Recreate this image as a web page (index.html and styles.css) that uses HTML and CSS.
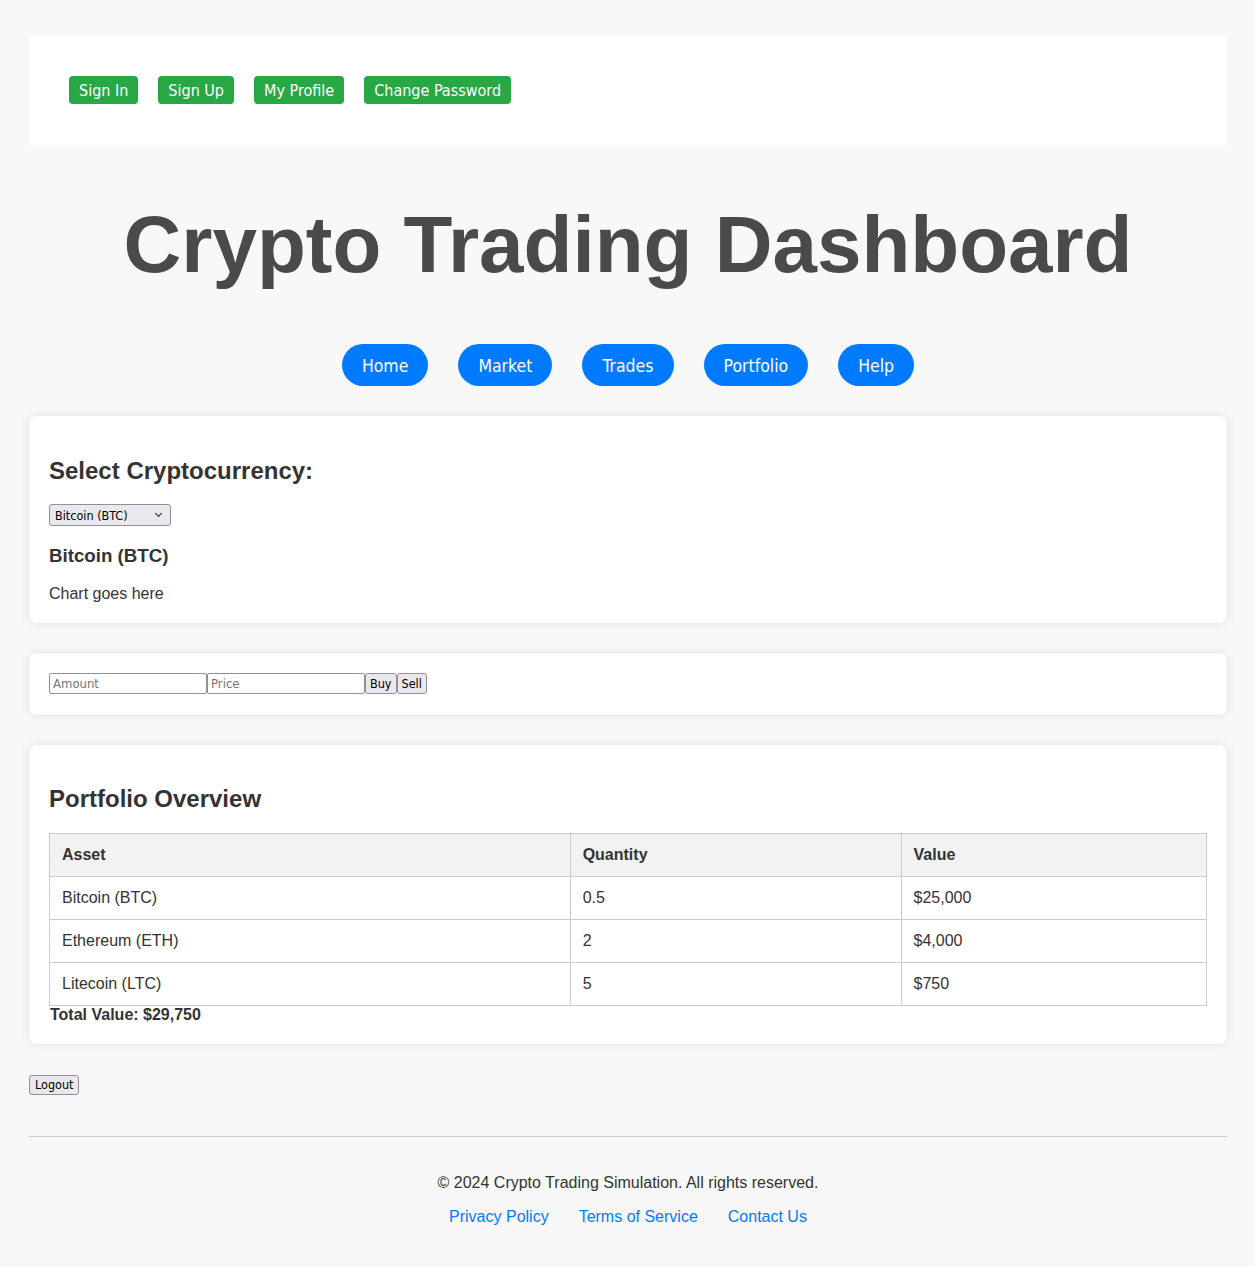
FILE: index.html
```html
<!DOCTYPE html>
<html lang="en">
<head>
<meta charset="utf-8">
<title>Crypto Trading Dashboard</title>
<link rel="stylesheet" href="styles.css">
</head>
<body>
<div class="page">
  <header class="top-bar">
    <button class="auth-btn">Sign In</button>
    <button class="auth-btn">Sign Up</button>
    <button class="auth-btn">My Profile</button>
    <button class="auth-btn">Change Password</button>
  </header>

  <h1 class="title">Crypto Trading Dashboard</h1>

  <nav class="main-nav">
    <button class="pill">Home</button>
    <button class="pill">Market</button>
    <button class="pill">Trades</button>
    <button class="pill">Portfolio</button>
    <button class="pill">Help</button>
  </nav>

  <section class="card select-card">
    <h2 class="card-title">Select Cryptocurrency:</h2>
    <div class="select-wrap">
      <select class="crypto-select">
        <option>Bitcoin (BTC)</option>
        <option>Ethereum (ETH)</option>
        <option>Litecoin (LTC)</option>
      </select>
    </div>
    <h3 class="coin-name">Bitcoin (BTC)</h3>
    <div class="chart">Chart goes here</div>
  </section>

  <section class="card trade-card">
    <div class="trade-form"><input class="field" type="text" placeholder="Amount"><input class="field" type="text" placeholder="Price"><button class="small-btn">Buy</button><button class="small-btn">Sell</button></div>
  </section>

  <section class="card">
    <h2 class="card-title">Portfolio Overview</h2>
    <table class="portfolio">
      <thead>
        <tr><th class="col-asset">Asset</th><th class="col-qty">Quantity</th><th class="col-val">Value</th></tr>
      </thead>
      <tbody>
        <tr><td>Bitcoin (BTC)</td><td>0.5</td><td>$25,000</td></tr>
        <tr><td>Ethereum (ETH)</td><td>2</td><td>$4,000</td></tr>
        <tr><td>Litecoin (LTC)</td><td>5</td><td>$750</td></tr>
      </tbody>
    </table>
    <div class="total">Total Value: $29,750</div>
  </section>

  <div class="logout-row"><button class="small-btn logout">Logout</button></div>

  <footer class="footer">
    <p class="copy">© 2024 Crypto Trading Simulation. All rights reserved.</p>
    <div class="footer-links">
      <a href="#">Privacy Policy</a>
      <a href="#">Terms of Service</a>
      <a href="#">Contact Us</a>
    </div>
  </footer>
</div>
</body>
</html>
```

FILE: styles.css
```css
html, body {
  margin: 0;
  padding: 0;
  background: #f8f8f8;
}

body {
  font-family: "Liberation Sans", Arial, sans-serif;
  color: #333;
  font-size: 16px;
}

.page {
  padding: 36px 28px 20px 29px;
}

.top-bar {
  background: #fff;
  padding: 40px 40px 41px;
  display: flex;
  gap: 20px;
}

.auth-btn {
  font-family: "DejaVu Sans Condensed", "DejaVu Sans", sans-serif;
  font-size: 16px;
  line-height: 18px;
  padding: 6px 10px 4px;
  border: none;
  border-radius: 4px;
  background: #28a745;
  color: #fff;
  cursor: pointer;
}

.title {
  font-size: 80px;
  font-weight: bold;
  color: #4a4a4a;
  text-align: center;
  margin: 53.6px 0;
}

.main-nav {
  display: flex;
  justify-content: center;
  gap: 30px;
  margin-bottom: 30px;
}

.pill {
  font-family: "DejaVu Sans Condensed", "DejaVu Sans", sans-serif;
  font-size: 17.5px;
  line-height: 22px;
  padding: 11px 20px 9px;
  border: none;
  border-radius: 21px;
  background: #007bff;
  color: #fff;
  cursor: pointer;
}

.card {
  background: #fff;
  border-radius: 8px;
  box-shadow: 0 0 10px rgba(0, 0, 0, 0.1);
  padding: 20px;
  margin-bottom: 30px;
}

.select-card {
  padding-bottom: 19px;
}

.trade-card {
  padding-bottom: 21px;
}

.card-title {
  font-size: 24px;
  margin: 19.92px 0;
}

.select-card .card-title {
  margin: 20.92px 0 18.92px;
}

.select-wrap {
  position: relative;
  width: 122px;
  height: 22px;
}

.select-wrap::after {
  content: "";
  position: absolute;
  right: 10px;
  top: 7px;
  width: 4px;
  height: 4px;
  border-right: 1.5px solid #222;
  border-bottom: 1.5px solid #222;
  transform: rotate(45deg);
  pointer-events: none;
}

.crypto-select {
  appearance: none;
  -webkit-appearance: none;
  box-sizing: border-box;
  width: 122px;
  height: 22px;
  margin: 0;
  padding: 0 20px 0 5px;
  border: 1px solid #8f8f9d;
  border-radius: 3px;
  background: #e9e9ed;
  font-family: "DejaVu Sans Condensed", "DejaVu Sans", sans-serif;
  font-size: 12.5px;
  color: #000;
}

.coin-name {
  font-size: 18.72px;
  margin: 18.72px 0;
}

.chart {
  line-height: 18.4px;
}

.trade-form {
  display: flex;
  align-items: stretch;
  height: 21px;
}

.field {
  box-sizing: border-box;
  width: 158px;
  height: 21px;
  margin: 0;
  padding: 1px 3px;
  border: 1px solid #8f8f9d;
  border-radius: 2px;
  font-family: "DejaVu Sans Condensed", "DejaVu Sans", sans-serif;
  font-size: 13px;
  color: #000;
}

.field::placeholder {
  color: #757575;
}

.small-btn {
  box-sizing: border-box;
  height: 21px;
  margin: 0;
  padding: 0 4px;
  border: 1px solid #8f8f9d;
  border-radius: 3px;
  background: #e9e9ed;
  font-family: "DejaVu Sans Condensed", "DejaVu Sans", sans-serif;
  font-size: 12.5px;
  color: #000;
}

.portfolio {
  width: 100%;
  border-collapse: collapse;
}

.portfolio th,
.portfolio td {
  border: 1px solid #ccc;
  padding: 12px;
  text-align: left;
  line-height: 18px;
}

.portfolio th {
  background: #f2f2f2;
  font-weight: bold;
}

.col-asset { width: 45%; }
.col-qty { width: 28.6%; }
.col-val { width: 26.4%; }

.total {
  font-weight: bold;
  line-height: 18px;
  padding-left: 1px;
}

.logout-row {
  display: flex;
}

.logout {
  height: 20px;
  margin-top: 1px;
  padding: 0 5px;
}

.footer {
  margin-top: 41px;
  border-top: 1px solid #ccc;
  padding-top: 21px;
  text-align: center;
}

.copy {
  margin: 16px 0;
  line-height: 18px;
}

.footer-links {
  display: flex;
  justify-content: center;
  gap: 30px;
  line-height: 18px;
}

.footer-links a {
  color: #007bff;
  text-decoration: none;
}
```
